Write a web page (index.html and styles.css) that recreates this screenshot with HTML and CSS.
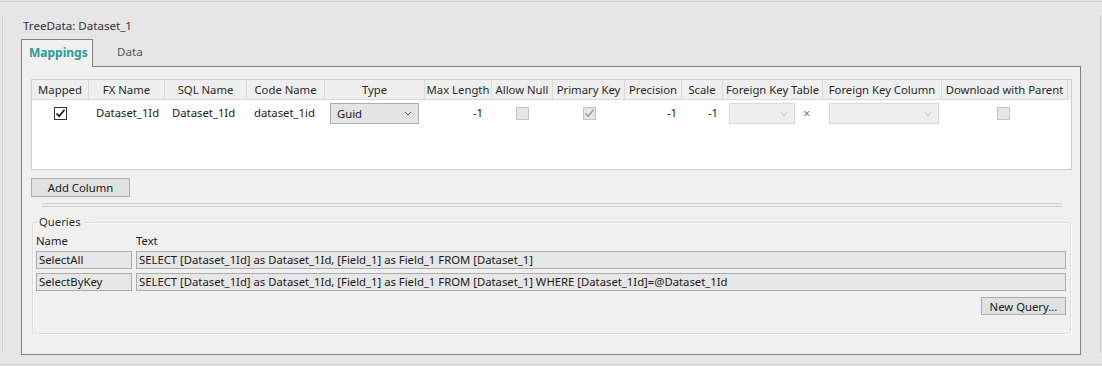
FILE: index.html
```html
<!DOCTYPE html>
<html>
<head>
<meta charset="utf-8">
<link rel="stylesheet" href="styles.css">
</head>
<body>
<div class="window">
  <div class="frame">
    <div class="title">TreeData: Dataset_1</div>
    <div class="tabs">
      <div class="tab active">Mappings</div>
      <div class="tab">Data</div>
    </div>
    <div class="panel">
      <div class="grid">
        <div class="row head">
          <div class="c">Mapped</div>
          <div class="c">FX Name</div>
          <div class="c">SQL Name</div>
          <div class="c">Code Name</div>
          <div class="c">Type</div>
          <div class="c">Max Length</div>
          <div class="c">Allow Null</div>
          <div class="c">Primary Key</div>
          <div class="c">Precision</div>
          <div class="c">Scale</div>
          <div class="c">Foreign Key Table</div>
          <div class="c">Foreign Key Column</div>
          <div class="c">Download with Parent</div>
        </div>
        <div class="row data">
          <div class="c center"><span class="cb on"><svg width="11" height="11" viewBox="0 0 11 11"><path d="M1.5 5.5 L4.2 8.3 L9.5 1.8" fill="none" stroke="#111" stroke-width="1.6"/></svg></span></div>
          <div class="c text">Dataset_1Id</div>
          <div class="c text">Dataset_1Id</div>
          <div class="c text">dataset_1id</div>
          <div class="c"><div class="combo type"><span>Guid</span><svg width="8" height="5" viewBox="0 0 8 5"><path d="M1 1 L4 4 L7 1" fill="none" stroke="#555" stroke-width="1"/></svg></div></div>
          <div class="c num pr9">-1</div>
          <div class="c center"><span class="cb off"></span></div>
          <div class="c center"><span class="cb off"><svg width="11" height="11" viewBox="0 0 11 11"><path d="M1.5 5.5 L4.2 8.3 L9.5 1.8" fill="none" stroke="#9a9a9a" stroke-width="1.4"/></svg></span></div>
          <div class="c num">-1</div>
          <div class="c num">-1</div>
          <div class="c fk"><div class="combo dis w66"><svg width="8" height="5" viewBox="0 0 8 5"><path d="M1 1 L4 4 L7 1" fill="none" stroke="#bdbdbd" stroke-width="1"/></svg></div><span class="x">×</span></div>
          <div class="c fk"><div class="combo dis w110"><svg width="8" height="5" viewBox="0 0 8 5"><path d="M1 1 L4 4 L7 1" fill="none" stroke="#bdbdbd" stroke-width="1"/></svg></div></div>
          <div class="c center dl"><span class="cb off"></span></div>
        </div>
      </div>
      <button class="btn add">Add Column</button>
      <div class="sep"></div>
      <div class="group">
        <div class="legend">Queries</div>
        <div class="qhead"><span class="qn">Name</span><span>Text</span></div>
        <div class="qrow"><div class="qname">SelectAll</div><div class="qtext">SELECT [Dataset_1Id] as Dataset_1Id, [Field_1] as Field_1 FROM [Dataset_1]</div></div>
        <div class="qrow"><div class="qname">SelectByKey</div><div class="qtext">SELECT [Dataset_1Id] as Dataset_1Id, [Field_1] as Field_1 FROM [Dataset_1] WHERE [Dataset_1Id]=@Dataset_1Id</div></div>
        <div class="qbtns"><button class="btn newq">New Query...</button></div>
      </div>
    </div>
  </div>
</div>
</body>
</html>
```
FILE: styles.css
```css
* { box-sizing: border-box; }
html, body { margin: 0; padding: 0; }
body {
  width: 1102px;
  height: 366px;
  background: #e6e6e6;
  font-family: "Noto Sans", "Segoe UI", sans-serif;
  font-size: 11.3px;
  color: #1a1a1a;
  overflow: hidden;
}
.window {
  width: 1102px;
  height: 366px;
  border-top: 1px solid #d2d2d2;
  margin-top: 1px;
  padding: 13px 1px 0 2px;
}
.frame {
  height: 338px;
  border-left: 1px solid #d0d0d0;
  border-right: 1px solid #d0d0d0;
  padding-left: 18px;
  position: relative;
}
.frame::after {
  content: "";
  position: absolute;
  left: -3px;
  right: -2px;
  bottom: -12px;
  border-bottom: 1px solid #d0d0d0;
}
.title {
  height: 24px;
  padding: 2px 0 0 2px;
  color: #333;
  line-height: 17px;
  font-size: 11.6px;
}
.tabs {
  display: flex;
  height: 27px;
  align-items: stretch;
}
.tab {
  padding: 0 7px 0 8px;
  line-height: 24px;
  color: #555;
  font-size: 11.6px;
}
.tab.active {
  width: 72px;
  background: #f0f0f0;
  border: 1px solid #828282;
  border-bottom: none;
  color: #2c9c94;
  font-weight: bold;
  position: relative;
  z-index: 1;
  height: 28px;
  line-height: 26px;
  font-size: 12px;
  padding-left: 7px;
}
.tab + .tab { padding-left: 24px; line-height: 26px; }
.panel {
  width: 1060px;
  height: 289px;
  background: #f0f0f0;
  border: 1px solid #828282;
  padding: 12px 8px 0 9px;
}
.grid {
  width: 1041px;
  height: 91px;
  background: #fff;
  border: 1px solid #cfcfcf;
}
.row {
  display: grid;
  grid-template-columns: 57px 76px 82px 78px 100px 67px 61px 72px 57px 41px 100px 119px 126px;
}
.head {
  height: 20px;
  background: #efefef;
}
.head .c {
  border-right: 1px solid #d9d9d9;
  border-bottom: 1px solid #d9d9d9;
  text-align: center;
  line-height: 19px;
  color: #2a2a2a;
  white-space: nowrap;
  overflow: hidden;
}
.data { height: 25px; }
.data .c {
  display: flex;
  align-items: center;
  white-space: nowrap;
}
.data .center { justify-content: center; }
.data .text { padding-left: 7px; }
.data .num { justify-content: flex-end; padding-right: 5px; }
.data .pr9 { padding-right: 9px; }
.data .dl { padding-right: 4px; }
.cb {
  width: 13px;
  height: 13px;
  display: flex;
  align-items: center;
  justify-content: center;
  margin-top: 1px;
}
.cb.on { border: 1px solid #333; background: #fff; }
.cb.off { border: 1px solid #c3c3c3; background: #e6e6e6; }
.combo {
  height: 21px;
  display: flex;
  align-items: center;
  justify-content: space-between;
  padding: 0 6px 0 6px;
  margin-top: 1px;
}
.combo.type {
  width: 89px;
  margin-left: 5px;
  background: #e5e5e5;
  border: 1px solid #acacac;
}
.combo.dis {
  background: #efefef;
  border: 1px solid #d9d9d9;
  justify-content: flex-end;
}
.w66 { width: 66px; }
.w110 { width: 110px; }
.fk { padding-left: 6px; }
.x {
  margin-left: 8px;
  color: #7a7a7a;
  font-size: 13px;
}
.btn {
  font-family: inherit;
  font-size: 11.3px;
  color: #1a1a1a;
  background: #e1e1e1;
  border: 1px solid #adadad;
  padding: 0;
  margin: 0;
  display: block;
  line-height: 15px;
}
.add {
  width: 99px;
  height: 19px;
  margin-top: 8px;
}
.sep {
  margin: 6px 10px 0 11px;
  height: 4px;
  border-top: 1px solid #cdcdcd;
  border-bottom: 1px solid #cdcdcd;
}
.group {
  position: relative;
  margin: 15px 0 0 1px;
  padding: 11px 4px 0 3px;
  width: 1039px;
  height: 112px;
  border: 1px solid #d8dde2;
  border-radius: 3px;
  box-shadow: inset 1px 1px 0 #fff, 1px 1px 0 #fff;
}
.legend {
  position: absolute;
  top: -8px;
  left: 5px;
  padding: 0 2px 0 1px;
  background: #f0f0f0;
  color: #333;
  line-height: 14px;
}
.qhead {
  display: flex;
  height: 14px;
  line-height: 14px;
  color: #222;
}
.qn { width: 100px; }
.qrow {
  display: flex;
  gap: 4px;
  margin-top: 3px;
  height: 18px;
}
.qrow + .qrow { margin-top: 4px; }
.qname, .qtext {
  background: #e6e6e6;
  border: 1px solid #acacac;
  height: 18px;
  line-height: 15px;
  padding-left: 2px;
  white-space: nowrap;
  overflow: hidden;
}
.qname { width: 96px; }
.qtext { width: 930px; }
.qbtns {
  display: flex;
  justify-content: flex-end;
  margin-top: 6px;
}
.newq {
  width: 85px;
  height: 18px;
}
```
